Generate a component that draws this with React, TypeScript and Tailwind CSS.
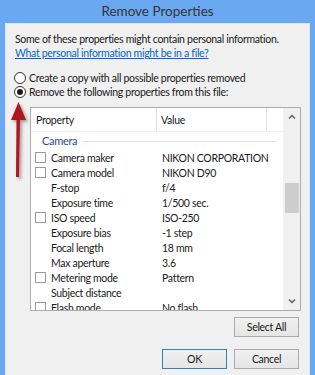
import React from "react";

type Row = { label: string; value?: string; check: boolean };

const rows: Row[] = [
  { label: "Camera maker", value: "NIKON CORPORATION", check: true },
  { label: "Camera model", value: "NIKON D90", check: true },
  { label: "F-stop", value: "f/4", check: false },
  { label: "Exposure time", value: "1/500 sec.", check: false },
  { label: "ISO speed", value: "ISO-250", check: true },
  { label: "Exposure bias", value: "-1 step", check: false },
  { label: "Focal length", value: "18 mm", check: false },
  { label: "Max aperture", value: "3.6", check: false },
  { label: "Metering mode", value: "Pattern", check: true },
  { label: "Subject distance", value: "", check: false },
  { label: "Flash mode", value: "No flash", check: true },
];

function Radio({ checked, label }: { checked: boolean; label: string }) {
  return (
    <div className="h-[14px] flex items-center whitespace-nowrap">
      <span className="w-[12px] h-[12px] rounded-full border border-[#333] bg-white flex items-center justify-center ml-[-1px] shrink-0">
        {checked && <span className="w-[6px] h-[6px] rounded-full bg-[#1a1a1a]" />}
      </span>
      <span className="ml-[3px]">{label}</span>
    </div>
  );
}

function Btn({ label, primary }: { label: string; primary?: boolean }) {
  return (
    <div
      className={
        "w-[65px] h-[20px] flex items-center justify-center border bg-gradient-to-b from-[#f0f0f0] to-[#e5e5e5] " +
        (primary ? "border-[#3c7fb1]" : "border-[#acacac]")
      }
    >
      {label}
    </div>
  );
}

export default function App() {
  return (
    <div className="relative w-[315px] h-[375px] bg-[#6aa9f2] px-[5px] flex flex-col overflow-hidden font-['Lato',sans-serif] text-[10.5px] tracking-[-0.3px] text-[#1a1a1a]">
      <div className="h-[23px] flex items-center justify-center text-[13.5px] tracking-normal text-[#333] leading-none pt-[1px]">
        Remove Properties
      </div>
      <div className="flex-1 bg-[#f0f0f0] border border-b-0 border-[#dde6f0] pl-[9px] pt-[8px] leading-[14px]">
        <div className="whitespace-nowrap">Some of these properties might contain personal information.</div>
        <div className="text-[#0066cc] underline whitespace-nowrap">What personal information might be in a file?</div>
        <div className="mt-[11px]">
          <Radio checked={false} label="Create a copy with all possible properties removed" />
          <Radio checked={true} label="Remove the following properties from this file:" />
        </div>
        <div className="ml-[15px] mt-[8px] w-[271px] h-[204px] border border-[#adadad] bg-white flex overflow-hidden">
          <div className="flex-1 flex flex-col overflow-hidden">
            <div className="h-[24px] flex shrink-0 border-b border-[#f2f2f2]">
              <div className="w-[126px] border-r border-[#e5e5e5] flex items-center pl-[5px]">Property</div>
              <div className="w-[110px] border-r border-[#e5e5e5] flex items-center pl-[4px]">Value</div>
              <div className="flex-1" />
            </div>
            <div className="h-[18px] flex items-center pl-[11px] shrink-0">
              <span className="text-[#1e4ba0] text-[11px]">Camera</span>
              <span className="flex-1 h-px bg-[#d5dff0] ml-[5px] mr-[8px]" />
            </div>
            {rows.map((r) => (
              <div key={r.label} className="h-[15px] flex items-center shrink-0 whitespace-nowrap">
                <div className="w-[126px] flex items-center pl-[4px] shrink-0">
                  {r.check ? (
                    <span className="w-[11px] h-[11px] border border-[#9a9a9a] bg-white shrink-0" />
                  ) : (
                    <span className="w-[11px] h-[11px] shrink-0" />
                  )}
                  <span className="ml-[5px]">{r.label}</span>
                </div>
                <div className="pl-[5px]">{r.value}</div>
              </div>
            ))}
          </div>
          <div className="w-[17px] bg-[#f0f0f0] flex flex-col items-center shrink-0">
            <div className="h-[17px] w-full flex items-center justify-center">
              <svg width="8" height="5" viewBox="0 0 8 5">
                <path d="M1 4.5 L4 1.5 L7 4.5" fill="none" stroke="#606060" strokeWidth="1.5" />
              </svg>
            </div>
            <div className="mt-[58px] w-[14px] h-[30px] bg-[#cdcdcd]" />
            <div className="flex-1" />
            <div className="h-[17px] w-full flex items-center justify-center">
              <svg width="8" height="5" viewBox="0 0 8 5">
                <path d="M1 0.5 L4 3.5 L7 0.5" fill="none" stroke="#606060" strokeWidth="1.5" />
              </svg>
            </div>
          </div>
        </div>
        <div className="ml-[15px] w-[271px] flex justify-end pr-[2px] mt-[6px]">
          <Btn label="Select All" />
        </div>
        <div className="ml-[15px] w-[271px] flex justify-end pr-[2px] mt-[12px] gap-[7px]">
          <Btn label="OK" primary />
          <Btn label="Cancel" />
        </div>
      </div>
      <svg className="absolute left-0 top-0" width="40" height="190" viewBox="0 0 40 190">
        <defs>
          <filter id="sh" x="-50%" y="-20%" width="200%" height="140%">
            <feDropShadow dx="2" dy="2" stdDeviation="1.5" floodColor="#000" floodOpacity="0.35" />
          </filter>
        </defs>
        <g filter="url(#sh)" fill="#b0141c">
          <polygon points="18.5,102 11,120 26,120" />
          <polygon points="16.5,119 20,119 19,177 16,177" />
        </g>
      </svg>
    </div>
  );
}
